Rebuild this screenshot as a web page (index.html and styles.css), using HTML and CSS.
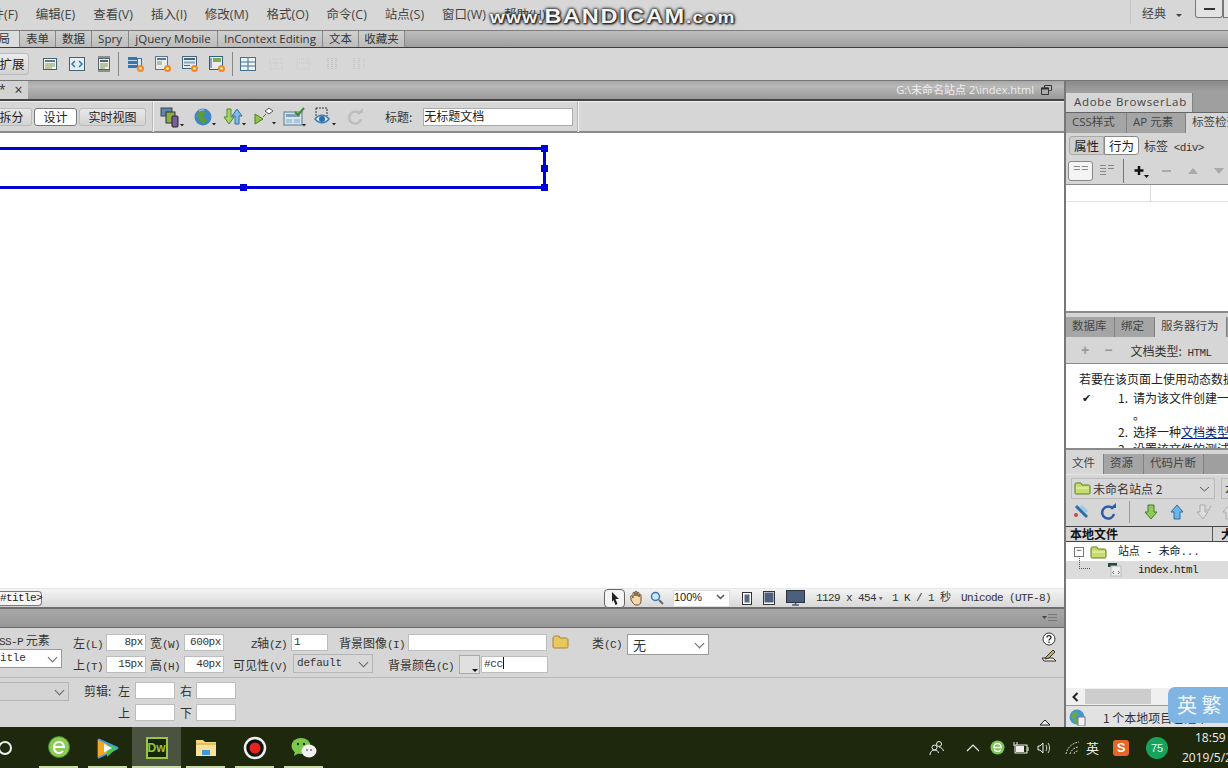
FILE: index.html
```html
<!DOCTYPE html>
<html lang="zh">
<head>
<meta charset="utf-8">
<title>Dreamweaver</title>
<link rel="stylesheet" href="styles.css">
</head>
<body>
<div class="app">
  <header class="menubar">
    <nav class="menus">
      <span>文件(F)</span><span>编辑(E)</span><span>查看(V)</span><span>插入(I)</span><span>修改(M)</span><span>格式(O)</span><span>命令(C)</span><span>站点(S)</span><span>窗口(W)</span><span>帮助(H)</span>
    </nav>
    <div class="workspace">
      <span class="ws-sep"></span><span class="ws-name">经典</span><span class="ws-arrow"></span>
      <span class="win-btn"><i></i></span><span class="win-btn2"></span>
    </div>
  </header>

  <div class="instabs">
    <span class="itab it-active it-first">布局</span><span class="itab w36">表单</span><span class="itab w36">数据</span><span class="itab w37">Spry</span><span class="itab w89">jQuery Mobile</span><span class="itab w105">InContext Editing</span><span class="itab w36">文本</span><span class="itab w46">收藏夹</span>
  </div>

  <div class="instool">
    <button class="ext-btn">扩展</button>
    <div class="igroup g1">
      <svg width="18" height="18" viewBox="0 0 18 18"><rect x="2.500" y="3.500" width="13" height="11" fill="#f4f6f2" stroke="#45606e"/><rect x="4" y="5" width="10" height="2" fill="#5e7d8c"/><path d="M4 9h10M4 11h10M4 13h7" stroke="#7e9a55"/></svg>
      <svg width="18" height="18" viewBox="0 0 18 18"><rect x="1.500" y="2.500" width="15" height="13" fill="#e6eef0" stroke="#45606e"/><path d="M7 6l-3 3 3 3M11 6l3 3-3 3" fill="none" stroke="#2f78b5" stroke-width="1.500"/></svg>
      <svg width="18" height="18" viewBox="0 0 18 18"><path d="M3 2h12M3 16h12" stroke="#444"/><rect x="3.500" y="3.500" width="11" height="11" fill="#eef0ea" stroke="#506570"/><rect x="5" y="5" width="8" height="2" fill="#506570"/><path d="M5 9h8M5 11h8M5 13h5" stroke="#7e9a55"/></svg>
    </div>
    <span class="vsep s1"></span>
    <div class="igroup g2">
      <svg width="18" height="18" viewBox="0 0 18 18"><rect x="1" y="2" width="9" height="3" fill="#2d78b5"/><rect x="1" y="6" width="9" height="3" fill="#2d78b5"/><rect x="1" y="10" width="9" height="3" fill="#2d78b5"/><rect x="10.500" y="3.500" width="4" height="8" fill="#dbe6ee" stroke="#2d78b5"/><circle cx="13.500" cy="13.500" r="3.500" fill="#ef8a2a"/><circle cx="13.500" cy="13.500" r="1.300" fill="#fff0a8"/></svg>
      <svg width="18" height="18" viewBox="0 0 18 18"><rect x="1.500" y="1.500" width="12" height="13" fill="#e7ecef" stroke="#5b7687"/><path d="M3 4h9" stroke="#5b7687" stroke-width="2"/><path d="M3 7h5M3 9h5" stroke="#7e9a55"/><circle cx="13.500" cy="13.500" r="3.500" fill="#ef8a2a"/><circle cx="13.500" cy="13.500" r="1.300" fill="#fff0a8"/></svg>
      <svg width="18" height="18" viewBox="0 0 18 18"><rect x="1.500" y="1.500" width="14" height="12" fill="#e7ecef" stroke="#46657a"/><rect x="3" y="3" width="11" height="2" fill="#46657a"/><rect x="3" y="6.500" width="11" height="2" fill="#8aa8bb"/><path d="M3 10.500h6" stroke="#46657a"/><circle cx="13.500" cy="13.500" r="3.500" fill="#ef8a2a"/><circle cx="13.500" cy="13.500" r="1.300" fill="#fff0a8"/></svg>
      <svg width="18" height="18" viewBox="0 0 18 18"><rect x="1.500" y="1.500" width="13" height="13" fill="#e7ecef" stroke="#2c5f87"/><rect x="5" y="3" width="8" height="4" fill="#82a84f"/><path d="M3 3v10" stroke="#2c5f87"/><circle cx="13.500" cy="13.500" r="3.500" fill="#ef8a2a"/><circle cx="13.500" cy="13.500" r="1.300" fill="#fff0a8"/></svg>
    </div>
    <span class="vsep s2"></span>
    <svg class="tbl" width="18" height="18" viewBox="0 0 18 18"><rect x="1.500" y="2.500" width="15" height="13" fill="#eaf2f5" stroke="#45708c"/><path d="M9 3v12M2 7h14M2 11h14" stroke="#45708c"/></svg>
    <div class="igroup g3">
      <svg width="18" height="18" viewBox="0 0 18 18"><path d="M3 4h12v10H3zM3 8h12M9 4v10" fill="none" stroke="#c9c9c9" stroke-dasharray="1 1"/></svg>
      <svg width="20" height="18" viewBox="0 0 20 18"><path d="M2 4h12v10H2zM2 8h12M14 9h4" fill="none" stroke="#c9c9c9" stroke-dasharray="1 1"/></svg>
      <svg width="16" height="18" viewBox="0 0 16 18"><path d="M3 3v12M7 3v12M11 3v12" fill="none" stroke="#c4c4c4" stroke-width="2" stroke-dasharray="1 1"/></svg>
      <svg width="16" height="18" viewBox="0 0 16 18"><path d="M3 3v12M8 3v12M13 3v12" fill="none" stroke="#c9c9c9" stroke-width="2" stroke-dasharray="1 1"/></svg>
    </div>
  </div>

  <main class="main">
    <section class="left">
      <div class="doctabs">
        <span class="doctab"><em>*</em><b>×</b></span>
        <span class="docpath">G:\未命名站点 2\index.html</span>
        <svg class="restore" width="11" height="10" viewBox="0 0 11 10"><path d="M3.500 2.500V.5h7v5H8.500M.5 3h7v6.500h-7z" fill="none" stroke="#333"/><path d="M.5 3.500h7" stroke="#333" stroke-width="2"/></svg>
      </div>
      <div class="doctool">
        <div class="viewbtns">
          <span class="vb vb1">拆分</span><span class="vb vb2">设计</span><span class="vb vb3">实时视图</span>
        </div>
        <span class="dsep d1"></span>
        <div class="dicons">
          <svg class="di-first" width="24" height="22" viewBox="0 0 24 22"><rect x="1" y="2" width="11" height="8" fill="#5b87b0" stroke="#444"/><rect x="6" y="6" width="9" height="11" fill="#8cae4a" stroke="#333"/><rect x="12" y="10" width="6" height="11" rx="1" fill="#7d5da0" stroke="#222"/><path d="M20 18h4l-2 2.500z" fill="#222"/></svg>
          <svg width="24" height="22" viewBox="0 0 24 22"><circle cx="10" cy="11" r="8.500" fill="#3f86c4"/><path d="M5 7c3-3 6-3 7-1s-3 3-2 5 4 1 4 3-3 4-5 3-1-3-3-4-3-3-1-6z" fill="#5c9a3a"/><path d="M6 5c2-1 3-1 5-1" stroke="#bfe0f5" fill="none"/><path d="M19 17h4l-2 2.500z" fill="#222"/></svg>
          <svg width="24" height="22" viewBox="0 0 24 22"><path d="M4 3h4v8h3l-5 7-5-7h3z" fill="#a6d46c" stroke="#4f8a22"/><path d="M12 18h4v-8h3l-5-7-5 7h3z" fill="#7dbbe8" stroke="#2d6ea6"/><path d="M19 17h4l-2 2.500z" fill="#222"/></svg>
          <svg width="24" height="22" viewBox="0 0 24 22"><path d="M2 8l8 5-8 5z" fill="#8fc24f" stroke="#4d7f1f"/><path d="M12 5l4-3 4 3-4 3z" fill="#fff" stroke="#555"/><path d="M10 11l3-3" stroke="#666"/><path d="M19 16h4l-2 2.500z" fill="#222"/></svg>
          <svg width="24" height="22" viewBox="0 0 24 22"><rect x="1" y="6" width="18" height="13" fill="#d7e4ed" stroke="#54788f"/><rect x="3" y="8" width="14" height="3" fill="#7fa0b7"/><rect x="3" y="13" width="6" height="4" fill="#a9c7db"/><rect x="11" y="13" width="6" height="4" fill="#a9c7db"/><path d="M12 6l3 3 6-7" fill="none" stroke="#3c8a2a" stroke-width="2"/><path d="M19 18h4l-2 2.500z" fill="#222"/></svg>
          <svg width="24" height="22" viewBox="0 0 24 22"><path d="M3 2h11v8" fill="none" stroke="#333" stroke-dasharray="2 1"/><path d="M3 2v9" stroke="#333" stroke-dasharray="2 1"/><path d="M2 13c4-5 10-5 14 0-4 5-10 5-14 0z" fill="#dbeaf5" stroke="#3b7eb4" stroke-width="1.500"/><circle cx="9" cy="13" r="3" fill="#2f6ea5"/><path d="M19 17h4l-2 2.500z" fill="#222"/></svg>
          <svg width="24" height="22" viewBox="0 0 24 22"><path d="M17 8a6 6 0 1 0 1 5" fill="none" stroke="#bdbdbd" stroke-width="2.500"/><path d="M14 7h6V2z" fill="#bdbdbd"/></svg>
        </div>
        <span class="dlabel">标题:</span>
        <span class="titleinput">无标题文档</span>
        <span class="dsep d2"></span>
      </div>
      <div class="canvas">
        <div class="apdiv">
          <i class="h h1"></i><i class="h h2"></i><i class="h h3"></i><i class="h h4"></i><i class="h h5"></i>
        </div>
      </div>
      <div class="status">
        <span class="tag">#title&gt;</span>
        <div class="stools">
          <span class="arrowbtn"><svg width="12" height="15" viewBox="0 0 12 15"><path d="M3 1l7 7H6.500l2 5-2 1-2-5L3 11z" fill="#222"/></svg></span>
          <svg class="hand" width="16" height="16" viewBox="0 0 16 16"><path d="M3 8c-1-2 0-3 1-2l1 2V3c0-1 2-1 2 0v3-4c0-1 2-1 2 0v4-3c0-1 2-1 2 0v4-2c0-1 2-1 2 0v6c0 3-2 4-4 4H8c-2 0-3-2-5-5z" fill="#f3d8a8" stroke="#6a5035"/></svg>
          <svg class="zoomi" width="14" height="15" viewBox="0 0 14 15"><circle cx="5.500" cy="5.500" r="4" fill="#cfe6f7" stroke="#3577b4" stroke-width="1.500"/><path d="M9 9l4 4" stroke="#666" stroke-width="2"/></svg>
          <span class="zoomsel">100%<svg width="9" height="6" viewBox="0 0 9 6"><path d="M1 1l3.500 3.500L8 1" fill="none" stroke="#555" stroke-width="1.500"/></svg></span>
          <svg class="dv dv1" width="10" height="13" viewBox="0 0 10 13"><rect x=".5" y=".5" width="9" height="12" fill="#fff" stroke="#333"/><rect x="2.500" y="2.500" width="5" height="8" fill="#566a86"/></svg>
          <svg class="dv dv2" width="12" height="14" viewBox="0 0 12 14"><rect x=".5" y=".5" width="11" height="13" fill="#fff" stroke="#333"/><rect x="1.500" y="1.500" width="9" height="10" fill="#4c607e"/></svg>
          <svg class="dv dv3" width="19" height="16" viewBox="0 0 19 16"><rect x=".5" y=".5" width="18" height="12" fill="#4c607e" stroke="#2c3340"/><path d="M6 15h7M9.500 13v2" stroke="#4c607e" stroke-width="1.500"/></svg>
        </div>
        <span class="st st1">1129 x 454<small>▾</small></span>
        <span class="st st2">1 K / 1 秒</span>
        <span class="st st3">Unicode (UTF-8)</span>
      </div>
      <div class="proptitle">
        <svg width="15" height="8" viewBox="0 0 15 8"><path d="M0 2h5L2.500 5z" fill="#444"/><path d="M6 .5h9M6 3.500h9M6 6.500h9" stroke="#777"/></svg>
      </div>
      <div class="props">
        <div class="prow r1">
          <span class="lb lb-el"><small>SS-P</small> 元素</span>
          <span class="lb w-l">左<small>(L)</small></span><span class="inp w40 ra">8px</span>
          <span class="lb w-w">宽<small>(W)</small></span><span class="inp w40 ra">600px</span>
          <span class="lb w-z"><small>Z</small>轴<small>(Z)</small></span><span class="inp w37">1</span>
          <span class="lb w-bg">背景图像<small>(I)</small></span><span class="inp w139"></span>
          <svg class="folder" width="17" height="14" viewBox="0 0 17 14"><path d="M1 3c0-1 1-2 2-2h4l1 2h6c1 0 2 1 2 2v7c0 1-1 1-2 1H3c-1 0-2 0-2-1z" fill="#e9c75c" stroke="#a38730"/></svg>
          <span class="lb w-cls">类<small>(C)</small></span><span class="sel sel-cls">无</span>
          <div class="helps">
            <svg width="14" height="14" viewBox="0 0 14 14"><circle cx="7" cy="7" r="6" fill="#fff" stroke="#333"/><path d="M5 5.500c0-2.500 4-2.500 4 0 0 1.500-2 1.500-2 3M7 9.500v1.500" fill="none" stroke="#222" stroke-width="1.300"/></svg>
            <svg width="16" height="14" viewBox="0 0 16 14"><path d="M1 9l11 0 3 3H3z" fill="#f5f0d8" stroke="#333"/><path d="M5 8l7-7 2 2-6 6-4 1z" fill="#c7b34a" stroke="#333"/></svg>
          </div>
        </div>
        <div class="prow r2">
          <span class="sel sel-id">itle</span>
          <span class="lb w-l">上<small>(T)</small></span><span class="inp w40 ra">15px</span>
          <span class="lb w-w">高<small>(H)</small></span><span class="inp w40 ra">40px</span>
          <span class="lb w-v">可见性<small>(V)</small></span><span class="sel sel-vis">default</span>
          <span class="lb w-bc">背景颜色<small>(C)</small></span><span class="swatch"><i></i></span><span class="inp w67 caret">#cc</span>
        </div>
        <div class="prow r3">
          <span class="sel sel-ov"></span>
          <span class="lb w-clip">剪辑: 左</span><span class="inp w40"></span>
          <span class="lb w-r">右</span><span class="inp w40"></span>
        </div>
        <div class="prow r4">
          <span class="lb w-top">上</span><span class="inp w40"></span>
          <span class="lb w-r">下</span><span class="inp w40"></span>
          <svg class="collapse" width="12" height="7" viewBox="0 0 12 7"><path d="M1 6h10L6 1z" fill="#eee" stroke="#222"/></svg>
        </div>
      </div>
    </section>

    <aside class="right">
      <div class="dock-head"></div>
      <div class="ptabs pt-lab"><span class="pt on w127">Adobe BrowserLab</span></div>
      <div class="ptabs pt-css"><span class="pt w61">CSS样式</span><span class="pt w59">AP 元素</span><span class="pt on w60">标签检查器</span></div>
      <div class="attr-row">
        <span class="seg seg1">属性</span><span class="seg seg2">行为</span><span class="taglab">标签 <code>&lt;div&gt;</code></span>
      </div>
      <div class="attr-tools">
        <span class="smallbtn"><svg width="16" height="8" viewBox="0 0 16 8"><path d="M1 1.500h6M1 4.500h6M9 1.500h6M9 4.500h6" stroke="#888"/></svg></span>
        <svg class="ml6" width="16" height="12" viewBox="0 0 16 12"><path d="M1 .5h6M1 3.500h6M1 6.500h6M1 9.500h6M9 .5h6M9 3.500h6" stroke="#888"/></svg>
        <span class="tsep"></span>
        <svg class="plus" width="16" height="16" viewBox="0 0 16 16"><path d="M5 3v9M.5 7.500h9" stroke="#111" stroke-width="2.500"/><path d="M10 12h5l-2.500 3z" fill="#111"/></svg>
        <span class="at-minus"></span><span class="at-up"></span><span class="at-down"></span>
      </div>
      <div class="attr-list"><div class="attr-head"><i></i></div></div>
      <div class="ptabs pt-db"><span class="pt w48">数据库</span><span class="pt w39">绑定</span><span class="pt on w72">服务器行为</span></div>
      <div class="sb-tools">
        <span class="gplus">+</span><span class="gminus">−</span><span class="doctype">文档类型: <code>HTML</code></span>
      </div>
      <div class="sb-body">
        <p class="sb-intro">若要在该页面上使用动态数据，</p>
        <div class="stp"><span class="chk">✔</span><span class="num">1.</span><span>请为该文件创建一个站点</span></div>
        <div class="stp"><span class="chk"></span><span class="num"></span><span>。</span></div>
        <div class="stp"><span class="chk"></span><span class="num">2.</span><span>选择一种<u>文档类型</u></span></div>
        <div class="stp"><span class="chk"></span><span class="num">3.</span><span>设置该文件的测试服务器</span></div>
      </div>
      <div class="ptabs pt-file"><span class="pt on w37">文件</span><span class="pt w39">资源</span><span class="pt w60">代码片断</span></div>
      <div class="f-selects">
        <span class="fsel"><svg width="17" height="13" viewBox="0 0 17 13"><path d="M1 2c0-1 1-1 2-1h4l1 2h6c1 0 2 0 2 2v6c0 1-1 1-2 1H3c-1 0-2 0-2-1z" fill="#c7dc6c" stroke="#5f7d20"/><path d="M2 6h13" stroke="#eef5c8"/></svg>未命名站点 2<svg class="caret-r" width="11" height="6" viewBox="0 0 11 6"><path d="M1 1l4.500 4L10 1" fill="none" stroke="#555"/></svg></span>
        <span class="fsel2">本地视图</span>
      </div>
      <div class="f-tools">
        <svg width="18" height="18" viewBox="0 0 18 18"><path d="M3 3l11 11" stroke="#2b6fa8" stroke-width="3"/><circle cx="3" cy="12" r="2" fill="#c44"/><path d="M8 3l6 6" stroke="#9cc8e8" stroke-width="3"/></svg>
        <svg width="18" height="18" viewBox="0 0 18 18"><path d="M14 6a6 6 0 1 0 1 5" fill="none" stroke="#2a5da8" stroke-width="2.500"/><path d="M11 5h6V0z" fill="#2a5da8"/></svg>
        <span class="tsep2"></span>
        <svg width="18" height="18" viewBox="0 0 18 18"><path d="M6 2h6v7h3l-6 7-6-7h3z" fill="#8ecb5a" stroke="#3f7d20"/></svg>
        <svg width="18" height="18" viewBox="0 0 18 18"><path d="M6 16h6V9h3L9 2 3 9h3z" fill="#6fb4e6" stroke="#2a6ea5"/></svg>
        <svg width="18" height="18" viewBox="0 0 18 18"><path d="M6 2h5v7h3l-5 7-6-7h3z" fill="#ddd" stroke="#aaa"/><path d="M12 6l2 2 3-5" fill="none" stroke="#aaa"/></svg>
        <svg width="18" height="18" viewBox="0 0 18 18"><path d="M6 16h5V9h3L9 2 3 9h3z" fill="#ddd" stroke="#aaa"/></svg>
      </div>
      <div class="f-head"><span class="fh1">本地文件</span><span class="fh2">大小</span></div>
      <div class="f-tree">
        <div class="tr tr1"><span class="box">−</span><svg width="17" height="13" viewBox="0 0 17 13"><path d="M1 2c0-1 1-1 2-1h4l1 2h6c1 0 2 0 2 2v6c0 1-1 1-2 1H3c-1 0-2 0-2-1z" fill="#c7dc6c" stroke="#5f7d20"/><path d="M2 6h13" stroke="#eef5c8"/></svg><span class="trt1">站点 - 未命...</span></div>
        <div class="tr tr2"><span class="dots"></span><svg width="14" height="14" viewBox="0 0 14 14"><rect x="0" y="0" width="9" height="4" fill="#2b4a35"/><rect x="3" y="3" width="10" height="10" fill="#eee" stroke="#bbb"/><path d="M6 8l-1.500 1.500L6 11M10 8l1.500 1.500L10 11" fill="none" stroke="#667"/></svg><span class="trt2">index.html</span></div>
      </div>
      <div class="f-scroll"><svg width="7" height="10" viewBox="0 0 7 10"><path d="M5.500 1L1.500 5l4 4" fill="none" stroke="#222" stroke-width="2"/></svg><i></i></div>
      <div class="f-status"><svg width="17" height="17" viewBox="0 0 17 17"><circle cx="8" cy="8" r="7.500" fill="#4a96cc"/><path d="M3 5c3-3 6-2 6 0s-3 2-2 4 3 1 2 4-4 1-4-1-3-3-2-7z" fill="#6aa84a"/><rect x="9" y="8" width="7" height="9" fill="#f2f2f2" stroke="#778"/></svg><span>1 个本地项目已选中</span></div>
    </aside>
  </main>

  <footer class="taskbar">
    <div class="tasks">
      <span class="task t0"><i class="cortana"></i></span>
      <span class="task t1 run"><svg width="24" height="26" viewBox="0 0 24 26"><circle cx="12" cy="12" r="10.500" fill="#8ccb55" stroke="#3f8a2a"/><path d="M6 12h12M7 12a5 5 0 0 1 10 0M7 13a5 5 0 0 0 9 3" fill="none" stroke="#fff" stroke-width="2"/></svg></span>
      <span class="task t2 run"><svg width="24" height="24" viewBox="0 0 24 24"><path d="M3 4L21 12 3 21z" fill="#3f9be8" stroke="#3f9be8" stroke-width="3" stroke-linejoin="round"/><path d="M2 4L11 8 11 17 2 21z" fill="#f5a623"/><path d="M11 8l10 4-10 9z" fill="#4cc24c"/><path d="M8 8l8 4-8 4.500z" fill="#fff"/></svg></span>
      <span class="task t3 run active"><span class="dw">Dw</span></span>
      <span class="task t4 run"><svg width="22" height="20" viewBox="0 0 22 20"><path d="M1 2h7l2 2h11v14H1z" fill="#f5d77e"/><rect x="1" y="7" width="20" height="11" fill="#f9e29a"/><rect x="7" y="12" width="8" height="5" fill="#3c9bd8"/><path d="M1 6h20" stroke="#cfa93f"/></svg></span>
      <span class="task t5 run"><svg width="24" height="24" viewBox="0 0 24 24"><circle cx="12" cy="12" r="10" fill="#111" stroke="#eee" stroke-width="2.500"/><circle cx="12" cy="12" r="5.500" fill="#e8231e"/></svg></span>
      <span class="task t6 run"><svg width="26" height="22" viewBox="0 0 26 22"><ellipse cx="10" cy="9" rx="9.500" ry="8" fill="#7cc94a"/><path d="M4 14l-1 5 5-3z" fill="#7cc94a"/><ellipse cx="18" cy="14" rx="7.500" ry="6.500" fill="#f1f1f1"/><circle cx="7" cy="7" r="1.200" fill="#1c3a10"/><circle cx="13" cy="7" r="1.200" fill="#1c3a10"/><circle cx="16" cy="13" r="1" fill="#777"/><circle cx="20" cy="13" r="1" fill="#777"/></svg></span>
    </div>
    <div class="tray">
      <svg class="tr-people" width="16" height="16" viewBox="0 0 16 16"><circle cx="10" cy="4" r="2.500" fill="none" stroke="#eee"/><circle cx="5.500" cy="7.500" r="2.500" fill="none" stroke="#eee"/><path d="M1 15c0-3 2-5 4.500-5s3.500 1 4 3M10 7c2 0 4 2 4.500 4" fill="none" stroke="#eee"/></svg>
      <svg class="tr-up" width="14" height="8" viewBox="0 0 14 8"><path d="M1 7l6-6 6 6" fill="none" stroke="#eee" stroke-width="1.200"/></svg>
      <svg class="tr-g" width="15" height="15" viewBox="0 0 15 15"><circle cx="7.500" cy="7.500" r="7" fill="#7fc658"/><path d="M3 7.500h9M4 7a3.500 3.500 0 0 1 7 0M4 9c1 3 5 3 7 1" fill="none" stroke="#fff" stroke-width="1.300"/></svg>
      <svg class="tr-bat" width="16" height="12" viewBox="0 0 16 12"><rect x="2" y="3" width="12" height="8" fill="none" stroke="#eee"/><rect x="3" y="4" width="8" height="6" fill="#eee"/><path d="M15 5v4M1 0v4M4 0v3" stroke="#eee"/></svg>
      <svg class="tr-vol" width="16" height="14" viewBox="0 0 16 14"><path d="M1 5h2l3-3v10L3 9H1z" fill="none" stroke="#eee"/><path d="M9 4c1 2 1 4 0 6M11 2c2 3 2 7 0 10" fill="none" stroke="#ddd"/></svg>
      <svg class="tr-wifi" width="16" height="14" viewBox="0 0 16 14"><path d="M1 13C2 7 7 2 14 1M5 13c1-3 3-6 8-7M9 13c0-2 2-3 4-3" fill="none" stroke="#ccc" stroke-dasharray="2 1"/></svg>
      <span class="tr-ime">英</span>
      <span class="tr-s">S</span>
      <span class="tr-75">75</span>
      <div class="clock"><span>18:59</span><span>2019/5/25</span></div>
    </div>
  </footer>

  <div class="watermark"><span class="wm-s">www.</span>BANDICAM<span class="wm-s">.com</span></div>
  <div class="ime-float">英 繁</div>
</div>
</body>
</html>
```
FILE: styles.css
```css
* { box-sizing: border-box; }
html, body { margin: 0; padding: 0; }
body { width: 1228px; height: 768px; overflow: hidden; background: #d6d6d6; font-family: "Noto Sans CJK SC", "Open Sans", sans-serif; color: #333; font-size: 12px; }
.app { position: relative; width: 1228px; height: 768px; overflow: hidden; display: flex; flex-direction: column; }
svg { display: block; flex: none; }
code { font-family: "Liberation Mono", monospace; font-size: 11px; letter-spacing: -.6px; }

/* menu */
.menubar { height: 31px; flex: none; display: flex; justify-content: space-between; background: #d7d7d7; border-bottom: 1px solid #7c7c7c; }
.menus { display: flex; gap: 18px; margin-left: -21px; padding-top: 6px; font: 12.500px/18px "Open Sans", "Noto Sans CJK SC", sans-serif; color: #444; white-space: nowrap; }
.workspace { display: flex; align-items: flex-start; width: 98px; position: relative; overflow: hidden; flex: none; }
.ws-sep { width: 1px; height: 24px; background: #c6c6c6; flex: none; }
.ws-name { margin: 4px 0 0 11px; color: #444; font-size: 12px; line-height: 18px; flex: none; }
.ws-arrow { margin: 14px 0 0 10px; border: 3px solid transparent; border-top: 3px solid #444; border-bottom: 0; flex: none; }
.win-btn { margin-left: 13px; width: 28px; height: 18px; border: 1px solid #777; border-top: 0; border-radius: 0 0 3px 3px; background: #e3e3e3; flex: none; display: flex; align-items: center; justify-content: center; }
.win-btn i { width: 11px; height: 2px; background: #333; }
.win-btn2 { width: 20px; height: 18px; border: 1px solid #777; border-top: 0; background: #e3e3e3; flex: none; }

/* insert tabs */
.instabs { height: 17px; flex: none; display: flex; padding-bottom: 1px; background: linear-gradient(#bdbdbd, #9e9e9e); border-bottom: 1px solid #3d3d3d; font: 11.500px/16px "Open Sans", "Noto Sans CJK SC", sans-serif; color: #333; overflow: hidden; }
.itab { flex: none; height: 16px; background: linear-gradient(#d0d0d0, #bcbcbc); border-right: 1px solid #888; text-align: center; white-space: nowrap; }
.it-first { width: 20px; text-align: left; text-indent: -13px; overflow: hidden; }
.it-active { background: #dcdcdc; }
.w36 { width: 36px; } .w37 { width: 37px; } .w89 { width: 89px; } .w105 { width: 105px; } .w46 { width: 46px; }

/* insert toolbar */
.instool { height: 33px; flex: none; background: #d7d7d7; border-bottom: 1px solid #757575; display: flex; align-items: center; }
.ext-btn { width: 31px; height: 22px; margin: 0 0 0 -2px; padding: 0 2px 0 0; border: 1px solid #bbb; border-left: 0; border-radius: 4px; background: linear-gradient(#ececec, #d2d2d2); font: 12.500px/18px "Noto Sans CJK SC", sans-serif; color: #222; overflow: hidden; white-space: nowrap; text-align: center; }
.igroup { display: flex; align-items: center; }
.g1 { margin-left: 12px; gap: 9px; }
.g2 { margin-left: 8px; gap: 9px; }
.g3 { margin-left: 10px; gap: 10px; }
.vsep { width: 1px; height: 24px; background: #888; flex: none; }
.s1 { margin-left: 5px; }
.s2 { margin-left: 6px; }
.tbl { margin-left: 6px; }

/* main */
.main { flex: 1; display: flex; min-height: 0; }
.left { width: 1065px; flex: none; display: flex; flex-direction: column; border-right: 1px solid #777; }

.doctabs { height: 20px; flex: none; display: flex; align-items: center; background: linear-gradient(#a8a8a8, #b8b8b8 30%, #999); border-bottom: 2px solid #444; }
.doctab { width: 28px; height: 18px; background: #d2d2d2; display: flex; gap: 9px; align-items: center; flex: none; }
.doctab em { font: 12px/12px "Open Sans", sans-serif; margin-left: -1px; }
.doctab b { font: 400 14px/14px "Open Sans", sans-serif; color: #333; }
.docpath { margin-left: auto; color: #eee; font: 11px/16px "Open Sans", "Noto Sans CJK SC", sans-serif; white-space: nowrap; }
.restore { margin: 0 12px 0 7px; }

.doctool { height: 32px; flex: none; display: flex; align-items: center; background: #d6d6d6; border-top: 1px solid #eee; border-bottom: 2px solid #8a8a8a; }
.viewbtns { display: flex; gap: 2px; align-items: center; margin-left: -9px; flex: none; }
.vb { height: 18px; border: 1px solid #bbb; border-radius: 3px; background: linear-gradient(#e8e8e8, #d2d2d2); line-height: 16px; text-align: center; color: #222; flex: none; font-size: 12px; }
.vb1 { width: 41px; border-left: 0; padding-left: 1px; }
.vb2 { width: 43px; background: #fff; border-color: #777; }
.vb3 { width: 67px; }
.dsep { width: 1px; height: 30px; background: #f2f2f2; box-shadow: -1px 0 0 #b8b8b8; flex: none; }
.d1 { margin-left: 7px; }
.d2 { margin-left: 5px; }
.dicons { display: flex; gap: 6px; margin-left: 6px; align-items: center; }
.di-first { margin-right: 3px; }
.dlabel { margin-left: 18px; color: #333; font-size: 12px; }
.titleinput { width: 150px; height: 18px; margin-left: 11px; background: #fff; border: 1px solid #aaa; line-height: 14px; font-size: 12px; color: #222; flex: none; }

.canvas { flex: 1; position: relative; background: #fff; min-height: 0; }
.apdiv { position: absolute; left: -100px; top: 14px; width: 646px; height: 42px; border: 3px solid #0000d8; }
.h { position: absolute; width: 7px; height: 7px; background: #0000d8; }
.h1 { left: 337px; top: -5px; }
.h2 { left: 337px; top: 34px; }
.h3 { left: 638px; top: -5px; }
.h4 { left: 638px; top: 15px; }
.h5 { left: 638px; top: 34px; }

.status { height: 21px; flex: none; display: flex; align-items: center; background: linear-gradient(#f4f4f4, #d8d8d8); border-top: 1px solid #e8e8e8; border-bottom: 2px solid #6e6e6e; font: 11px/14px "Liberation Mono", "Noto Sans CJK SC", monospace; letter-spacing: -.6px; color: #333; }
.tag { width: 42px; height: 15px; background: #f6f6f6; border: 1px solid #777; border-left: 0; border-radius: 0 4px 4px 0; color: #222; padding-right: 1px; text-align: right; line-height: 13px; flex: none; }
.stools { display: flex; align-items: center; margin-left: 562px; flex: none; }
.arrowbtn { width: 21px; height: 19px; background: #f4f4f4; border: 1px solid #666; border-radius: 4px; display: flex; align-items: center; justify-content: center; }
.hand { margin-left: 3px; }
.zoomi { margin-left: 6px; }
.zoomsel { margin-left: 9px; width: 57px; height: 17px; background: #fff; border: 1px solid #ddd; display: flex; align-items: center; justify-content: space-between; padding: 0 4px 2px 0; font: 11px/14px "Liberation Sans", sans-serif; letter-spacing: 0; color: #222; }
.dv1 { margin-left: 12px; }
.dv2 { margin-left: 11px; }
.dv3 { margin-left: 11px; }
.st { flex: none; white-space: nowrap; }
.st small { font-size: 9px; color: #666; margin-left: 2px; }
.st1 { margin-left: 11px; width: 74px; }
.st2 { margin-left: 2px; width: 69px; }
.st3 { margin-left: 0; }

.proptitle { height: 19px; flex: none; background: linear-gradient(#a8a8a8, #979797); border-bottom: 1px solid #666; display: flex; align-items: center; justify-content: flex-end; padding-right: 7px; }
.props { height: 99px; flex: none; background: #d6d6d6; font: 12px/16px "Noto Sans CJK SC", sans-serif; color: #333; position: relative; }
.prow { display: flex; align-items: flex-start; }
.r1 { height: 17px; margin-top: 6px; }
.r2 { height: 17px; margin-top: 5px; }
.r3 { height: 22px; margin-top: 4px; border-top: 1px solid #b8b8b8; padding-top: 4px; }
.r4 { height: 17px; margin-top: 5px; position: relative; }
.lb { flex: none; white-space: nowrap; font: 12px/17px "Noto Sans CJK SC", sans-serif; text-align: right; color: #333; }
.lb small { font: 11px/17px "Liberation Mono", monospace; letter-spacing: -.6px; }
.lb-el { width: 52px; text-align: left; margin-top: -3px; margin-left: -1px; margin-right: 22px; }
.w-l { width: 30px; margin-right: 3px; }
.w-w { width: 34px; margin-right: 4px; }
.w-z { width: 63px; margin-right: 4px; }
.w-v { width: 63px; margin-right: 6px; }
.w-bg { width: 77px; margin-right: 3px; }
.w-bc { width: 81px; margin-right: 5px; }
.w-cls { width: 53px; margin-right: 5px; }
.w-clip { width: 46px; margin-right: 5px; margin-left: -1px; word-spacing: 4px; }
.w-r { width: 17px; margin-right: 4px; }
.w-top { width: 130px; margin-right: 5px; }
.inp { flex: none; height: 17px; background: #fff; border: 1px solid #bdbdbd; font: 11px/15px "Liberation Mono", monospace; letter-spacing: -.4px; color: #333; padding: 0 2px; white-space: nowrap; }
.w40 { width: 40px; } .w37 { width: 37px; } .w139 { width: 139px; } .w67 { width: 67px; }
.ra { text-align: right; }
.caret::after { content: ""; display: inline-block; width: 1px; height: 12px; background: #111; vertical-align: -2px; }
.folder { margin-left: 5px; margin-top: 1px; }
.sel { flex: none; position: relative; background: #fff; border: 1px solid #999; font: 11px/16px "Liberation Mono", monospace; letter-spacing: -.2px; color: #333; padding: 0 3px; overflow: hidden; white-space: nowrap; }
.sel::after { content: ""; position: absolute; right: 5px; top: 50%; width: 6px; height: 6px; margin-top: -5px; border-right: 1px solid #666; border-bottom: 1px solid #666; transform: rotate(45deg); }
.sel-cls { width: 82px; height: 21px; font: 13px/20px "Noto Sans CJK SC", sans-serif; padding-left: 5px; }
.sel-id { width: 62px; height: 19px; margin-right: 11px; margin-top: -7px; padding-left: 0; border-left: 0; }
.sel-vis { width: 80px; height: 19px; margin-top: -2px; background: #d8d8d8; border-color: #b5b5b5; }
.sel-ov { width: 69px; height: 19px; margin-right: 16px; background: #d4d4d4; border-color: #b5b5b5; border-left: 0; }
.swatch { width: 21px; height: 19px; margin-top: -1px; flex: none; background: #e0e0e0; border: 1px solid #aaa; position: relative; margin-right: 1px; }
.swatch i { position: absolute; right: 1px; bottom: 1px; border: 3px solid transparent; border-top: 3px solid #111; border-bottom: 0; }
.helps { position: absolute; right: 7px; top: 4px; display: flex; flex-direction: column; align-items: center; gap: 3px; }
.collapse { position: absolute; left: 1039px; top: 15px; }

/* right panels */
.right { flex: 1; display: flex; flex-direction: column; min-width: 0; border-left: 1px solid #777; background: #d6d6d6; overflow: hidden; }
.dock-head { height: 12px; flex: none; background: linear-gradient(#8a8a8a, #a2a2a2); }
.ptabs { flex: none; display: flex; background: #9f9f9f; font: 11.500px/18px "Open Sans", "Noto Sans CJK SC", sans-serif; color: #444; white-space: nowrap; overflow: hidden; }
.pt { flex: none; height: 100%; padding-left: 6px; background: #a5a5a5; border-right: 1px solid #808080; text-align: left; }
.pt.on { background: #d6d6d6; }
.pt-lab { height: 20px; border-bottom: 1px solid #666; }
.pt-lab .pt { padding-left: 8px; letter-spacing: .7px; }
.pt-css { height: 20px; }
.pt-db { height: 20px; margin-top: 4px; }
.pt-file { height: 20px; margin-top: 4px; }
.w127 { width: 127px; } .w61 { width: 61px; } .w59 { width: 59px; } .w60 { width: 60px; } .w48 { width: 49px; } .w39 { width: 40px; } .w72 { width: 72px; }
.pt.w37 { width: 38px; }

.attr-row { height: 25px; flex: none; display: flex; align-items: center; padding-left: 3px; font-size: 12px; }
.seg { height: 19px; width: 35px; line-height: 17px; text-align: center; border: 1px solid #aaa; color: #222; flex: none; font-size: 12.500px; }
.seg1 { background: #cfcfcf; border-radius: 3px 0 0 3px; }
.seg2 { background: #fff; border-radius: 0 3px 3px 0; border-color: #888; }
.taglab { margin-left: 5px; white-space: nowrap; }
.taglab code { margin-left: 3px; }
.attr-tools { height: 27px; flex: none; display: flex; align-items: center; padding-left: 2px; border-bottom: 1px solid #8a8a8a; }
.smallbtn { width: 25px; height: 20px; background: #f4f4f4; border: 1px solid #888; border-radius: 3px; display: flex; justify-content: center; padding-top: 3px; flex: none; }
.ml6 { margin-left: 6px; }
.tsep { width: 1px; height: 24px; background: #777; margin-left: 8px; flex: none; }
.plus { margin-left: 10px; }
.at-minus { width: 9px; height: 2px; background: #aaa; margin-left: 12px; flex: none; }
.at-up { margin-left: 17px; border: 5px solid transparent; border-bottom: 6px solid #aaa; border-top: 0; flex: none; }
.at-down { margin-left: 16px; border: 5px solid transparent; border-top: 6px solid #aaa; border-bottom: 0; flex: none; }
.attr-list { height: 128px; flex: none; background: #fff; border-bottom: 2px solid #8a8a8a; }
.attr-head { height: 17px; border-bottom: 1px solid #e4e4e4; position: relative; }
.attr-head i { position: absolute; left: 84px; top: 0; width: 1px; height: 17px; background: #d8d8d8; }
.sb-tools { height: 26px; flex: none; display: flex; align-items: center; padding-left: 15px; }
.gplus { color: #999; font: 700 14px/14px "Liberation Sans", sans-serif; }
.gminus { color: #999; font: 700 14px/14px "Liberation Sans", sans-serif; margin-left: 15px; }
.doctype { margin-left: 18px; white-space: nowrap; color: #333; }
.doctype code { margin-left: 3px; }
.sb-body { height: 87px; flex: none; background: #fff; overflow: hidden; padding: 6px 0 0 13px; border-top: 1px solid #8a8a8a; border-bottom: 2px solid #8a8a8a; font-size: 12px; line-height: 17px; color: #222; white-space: nowrap; }
.sb-intro { margin: 0 0 2px; }
.stp { display: flex; height: 17px; }
.chk { width: 39px; padding-left: 3px; flex: none; font-size: 11px; }
.num { width: 15px; flex: none; }
.stp u { color: #00227a; }
.f-selects { height: 27px; flex: none; display: flex; align-items: center; padding-left: 5px; gap: 6px; border-top: 1px solid #e6e6e6; }
.fsel { width: 144px; height: 21px; flex: none; border: 1px solid #bbb; background: #d8d8d8; display: flex; align-items: center; gap: 2px; padding-left: 2px; white-space: nowrap; position: relative; }
.caret-r { position: absolute; right: 4px; top: 7px; }
.fsel2 { width: 60px; height: 21px; flex: none; border: 1px solid #bbb; line-height: 19px; padding-left: 3px; white-space: nowrap; }
.f-tools { height: 25px; flex: none; display: flex; align-items: center; padding: 0 0 3px 7px; gap: 8px; }
.tsep2 { width: 1px; height: 22px; background: #999; flex: none; margin: 0 4px; }
.f-head { height: 16px; flex: none; display: flex; background: #d6d6d6; border: 1px solid #444; border-left: 0; border-right: 0; font-weight: 700; line-height: 14px; color: #111; white-space: nowrap; }
.fh1 { width: 147px; padding-left: 4px; border-right: 1px solid #555; flex: none; }
.fh2 { padding-left: 8px; }
.f-tree { height: 146px; flex: none; background: #fff; font: 11px/18px "Liberation Mono", "Noto Sans CJK SC", monospace; color: #222; padding-top: 1px; white-space: nowrap; }
.tr { height: 18px; display: flex; align-items: center; }
.tr1 { padding-left: 8px; }
.box { width: 10px; height: 10px; border: 1px solid #777; line-height: 7px; text-align: center; font-size: 9px; flex: none; margin-right: 6px; }
.trt1 { margin-left: 11px; letter-spacing: -.2px; }
.tr2 { background: #dcdcdc; padding-left: 28px; position: relative; }
.dots { position: absolute; left: 13px; top: -5px; width: 11px; height: 13px; border-left: 1px dotted #555; border-bottom: 1px dotted #555; }
.tr2 svg { margin-left: 14px; }
.trt2 { margin-left: 8px; padding-left: 8px; letter-spacing: -.6px; }
.f-scroll { height: 17px; flex: none; background: #f0f0f0; display: flex; align-items: center; padding-left: 6px; }
.f-scroll i { width: 66px; height: 15px; background: #cdcdcd; margin-left: 6px; flex: none; }
.f-status { flex: 1; min-height: 0; display: flex; align-items: center; padding: 2px 0 0 3px; border-top: 1px solid #999; background: #e2e2e2; white-space: nowrap; overflow: hidden; }
.f-status span { margin-left: 17px; }

/* taskbar */
.taskbar { height: 41px; flex: none; background: #1e280c; display: flex; justify-content: space-between; align-items: stretch; color: #eee; }
.tasks { display: flex; margin-left: -3px; }
.task { width: 49px; position: relative; display: flex; align-items: center; justify-content: center; flex: none; }
.t0 { width: 16px; margin-right: 21px; }
.task.run::after { content: ""; position: absolute; left: 5px; right: 5px; bottom: 0; height: 2px; background: #c6dba8; }
.active { background: #4a5340; }
.active.run::after { left: 0; right: 0; }
.cortana { width: 14px; height: 14px; border: 2px solid #eee; border-radius: 50%; }
.dw { width: 22px; height: 22px; background: #152505; border: 2px solid #9bc53d; color: #9bc53d; font: 700 12px/18px "Liberation Sans", sans-serif; text-align: center; }
.tray { display: flex; align-items: center; position: relative; flex: none; }
.tr-up { margin-left: 21px; }
.tr-g { margin-left: 10px; }
.tr-bat { margin-left: 8px; }
.tr-vol { margin-left: 8px; }
.tr-wifi { margin-left: 12px; }
.tr-ime { margin-left: 5px; font-size: 13px; line-height: 16px; }
.tr-s { margin-left: 14px; width: 16px; height: 16px; background: #e8642a; border-radius: 3px; color: #fff; font: 700 13px/16px "Liberation Sans", sans-serif; text-align: center; }
.tr-75 { margin-left: 17px; width: 22px; height: 22px; background: #17a35a; border-radius: 50%; color: #dff; font: 11px/22px "Liberation Sans", sans-serif; text-align: center; }
.clock { margin-left: 3px; width: 57px; overflow: hidden; display: flex; flex-direction: column; align-items: center; font: 12px/20px "Open Sans", sans-serif; color: #eee; white-space: nowrap; }
.clock span:first-child { padding-left: 24px; align-self: flex-start; }
.clock span:last-child { align-self: flex-start; padding-left: 11px; }

/* overlays */
.watermark { position: absolute; left: 490px; top: 1px; font: 700 21px/30px "Liberation Sans", sans-serif; letter-spacing: 1.500px; color: #f4f4f4; text-shadow: 0 0 3px #111, 0 0 3px #111, 1px 1px 2px #111; white-space: nowrap; transform: scaleX(1.120); transform-origin: left center; }
.wm-s { font-size: 17px; letter-spacing: 1.200px; }
.ime-float { position: absolute; left: 1168px; top: 687px; width: 70px; height: 36px; background: #80b4e2; border-radius: 7px; color: #f2f6fb; font: 20px/36px "Noto Sans CJK SC", sans-serif; padding-left: 9px; white-space: nowrap; }
```
